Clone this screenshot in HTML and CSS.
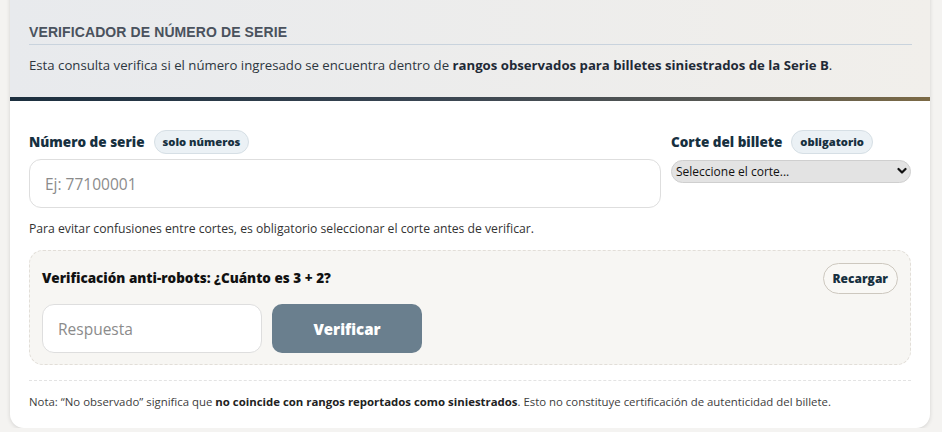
FILE: index.html
```html
<!DOCTYPE html>
<html lang="es">
<head>
    <meta charset="UTF-8">
    <title>Verificador de número de serie</title>
    <meta name="viewport" content="width=device-width, initial-scale=1.0">
    <link rel="stylesheet" href="styles.css">
</head>
<body>
    <div class="card">
        <div class="card-head">
            <h2>Verificador de número de serie</h2>
            <p>Esta consulta verifica si el número ingresado se encuentra dentro de <b>rangos observados para billetes siniestrados de la Serie B</b>.</p>
        </div>
        <div class="card-body">
            <div class="fields">
                <div class="field">
                    <label for="serie">Número de serie <span class="tag">solo números</span></label>
                    <input type="text" id="serie" class="big-input" placeholder="Ej: 77100001">
                </div>
                <div class="field">
                    <label for="corte">Corte del billete <span class="tag">obligatorio</span></label>
                    <div class="select-wrap">
                        <select id="corte">
                            <option value="">Seleccione el corte...</option>
                            <option value="10">Bs 10</option>
                            <option value="20">Bs 20</option>
                            <option value="50">Bs 50</option>
                        </select>
                        <svg class="chev" width="10" height="8" viewBox="0 0 10 8"><path d="M1.5 2 L5 5.5 L8.5 2" fill="none" stroke="#111" stroke-width="2.2" stroke-linecap="round" stroke-linejoin="round"/></svg>
                    </div>
                </div>
            </div>
            <p class="help">Para evitar confusiones entre cortes, es obligatorio seleccionar el corte antes de verificar.</p>

            <div class="captcha">
                <div class="captcha-top">
                    <span class="captcha-q">Verificación anti-robots: ¿Cuánto es 3 + 2?</span>
                    <button type="button" class="reload">Recargar</button>
                </div>
                <div class="captcha-row">
                    <input type="text" class="big-input answer" placeholder="Respuesta">
                    <button type="button" class="verify">Verificar</button>
                </div>
            </div>

            <p class="note">Nota: “No observado” significa que <b>no coincide con rangos reportados como siniestrados</b>. Esto no constituye certificación de autenticidad del billete.</p>
        </div>
    </div>
</body>
</html>
```

FILE: styles.css
```css
body { margin: 0; background: #f4f3f1; font-family: 'Open Sans', 'Noto Sans', Arial, sans-serif; color: #2b3440; }
.card { margin: -20px 12px 0 10px; background: #fff; border-radius: 14px; box-shadow: 0 1px 4px #0002; overflow: hidden; height: 448px; }
.card-head { padding: 44px 18px 0 19px; height: 73px; background: linear-gradient(90deg, #e8eaed, #f1efeb); border-bottom: 4px solid; border-image: linear-gradient(90deg, #1c2f3f, #394552 45%, #5a5a54 80%, #7c6a45) 1; }
.card-head h2 { margin: 0; padding-bottom: 4px; font-family: 'Liberation Sans', Arial, sans-serif; font-size: 14px; text-transform: uppercase; color: #4a525d; border-bottom: 1px solid #c9d3dd; letter-spacing: 0.1px; }
.card-head p { margin: 11px 0 0; font-size: 13.2px; color: #2d3640; }
.card-head b { color: #1f2a36; }

.card-body { padding: 29px 19px 0 19px; }
.fields { display: grid; grid-template-columns: 632px 240px; gap: 10px; }
.field label { display: flex; align-items: center; gap: 9px; font-size: 13.5px; font-weight: 800; color: #17303f; height: 24px; margin-bottom: 5px; }
.tag { font-size: 11.2px; font-weight: 800; background: #ebf1f5; border: 1px solid #d6dfe5; border-radius: 12px; padding: 3px 8px 4px; color: #17303f; }
.big-input { box-sizing: border-box; width: 100%; height: 49px; border: 1px solid #dedede; border-radius: 12px; padding: 0 15px; font-family: inherit; font-size: 15.5px; background: #fff; }
.big-input::placeholder { color: #8b8b8b; }
.select-wrap { position: relative; }
select { width: 100%; height: 23px; appearance: none; border: 1px solid #cfcfcf; border-radius: 12px; background: #e3e3e3; font-family: inherit; font-size: 12px; color: #111; padding: 0 4px; }
.chev { position: absolute; right: 4px; top: 8px; pointer-events: none; }
.help { margin: 12px 0 0; font-size: 12.2px; color: #333; }

.captcha { margin-top: 13px; background: #f7f6f3; border: 1px dashed #e2ded8; border-radius: 14px; padding: 12px 12px 11px 12px; }
.captcha-top { display: flex; align-items: center; justify-content: space-between; height: 30px; }
.captcha-q { font-size: 13.5px; font-weight: 800; color: #111; }
.reload { height: 31px; padding: 0 9px; border: 1px solid #cdc8bf; border-radius: 16px; background: #f9f8f5; font-family: inherit; font-size: 12px; font-weight: 800; color: #17303f; }
.captcha-row { display: flex; gap: 10px; margin-top: 11px; }
.answer { width: 220px; }
.verify { width: 150px; height: 49px; border: none; border-radius: 10px; background: #6a7f8e; color: #fff; font-family: inherit; font-size: 15px; font-weight: 800; }

.note { margin: 15px 0 0; padding-top: 13px; border-top: 1px dashed #e3e3e3; font-size: 11.4px; color: #3d3d3d; }
.note b { color: #222; }
```
